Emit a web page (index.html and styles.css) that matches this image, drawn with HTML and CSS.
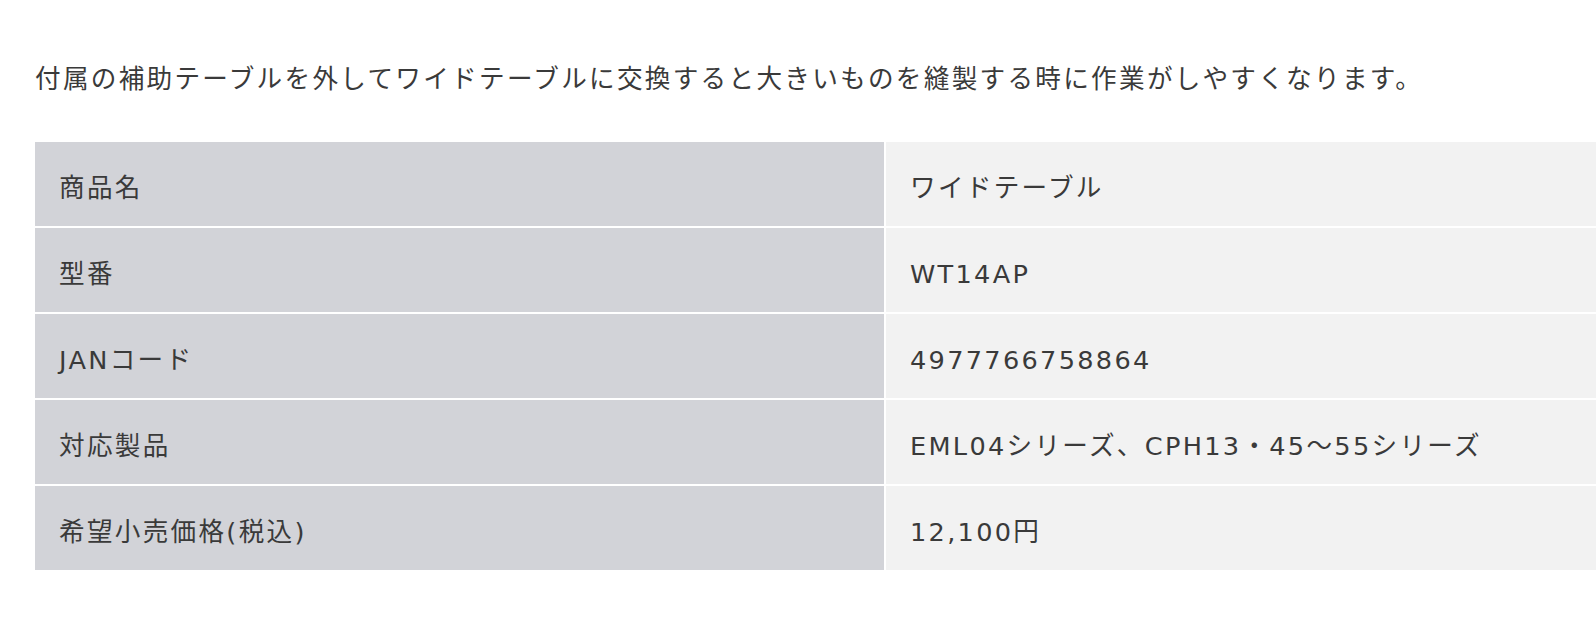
FILE: index.html
```html
<!DOCTYPE html>
<html lang="ja">
<head>
<meta charset="utf-8">
<title>ワイドテーブル</title>
<link rel="stylesheet" href="styles.css">
</head>
<body>
<main class="content">
  <p class="lead">付属の補助テーブルを外してワイドテーブルに交換すると大きいものを縫製する時に作業がしやすくなります。</p>
  <table class="spec">
    <tbody>
      <tr><th>商品名</th><td>ワイドテーブル</td></tr>
      <tr><th>型番</th><td>WT14AP</td></tr>
      <tr><th>JANコード</th><td>4977766758864</td></tr>
      <tr><th>対応製品</th><td>EML04シリーズ、CPH13・45～55シリーズ</td></tr>
      <tr><th>希望小売価格(税込)</th><td>12,100円</td></tr>
    </tbody>
  </table>
</main>
</body>
</html>
```
FILE: styles.css
```css
html, body {
  margin: 0;
  padding: 0;
  background: #ffffff;
  overflow: hidden;
}
body {
  font-family: "DejaVu Sans", "Noto Sans CJK JP", sans-serif;
  color: #3a3a3a;
  font-size: 25.6px;
  letter-spacing: 2.3px;
}
.content {
  padding: 59px 0 0 35px;
}
.lead {
  margin: 0 0 41px 0;
  line-height: 40px;
}
.spec {
  border-collapse: separate;
  border-spacing: 2px;
  margin-left: -2px;
  width: 1565px;
  table-layout: fixed;
}
.spec th,
.spec td {
  text-align: left;
  font-weight: normal;
  line-height: 40px;
  height: 40px;
  padding: 26px 24px 18px;
  vertical-align: middle;
}
.spec th {
  width: 801px;
  background: #d2d3d8;
}
.spec td {
  background: #f2f2f2;
}
```
